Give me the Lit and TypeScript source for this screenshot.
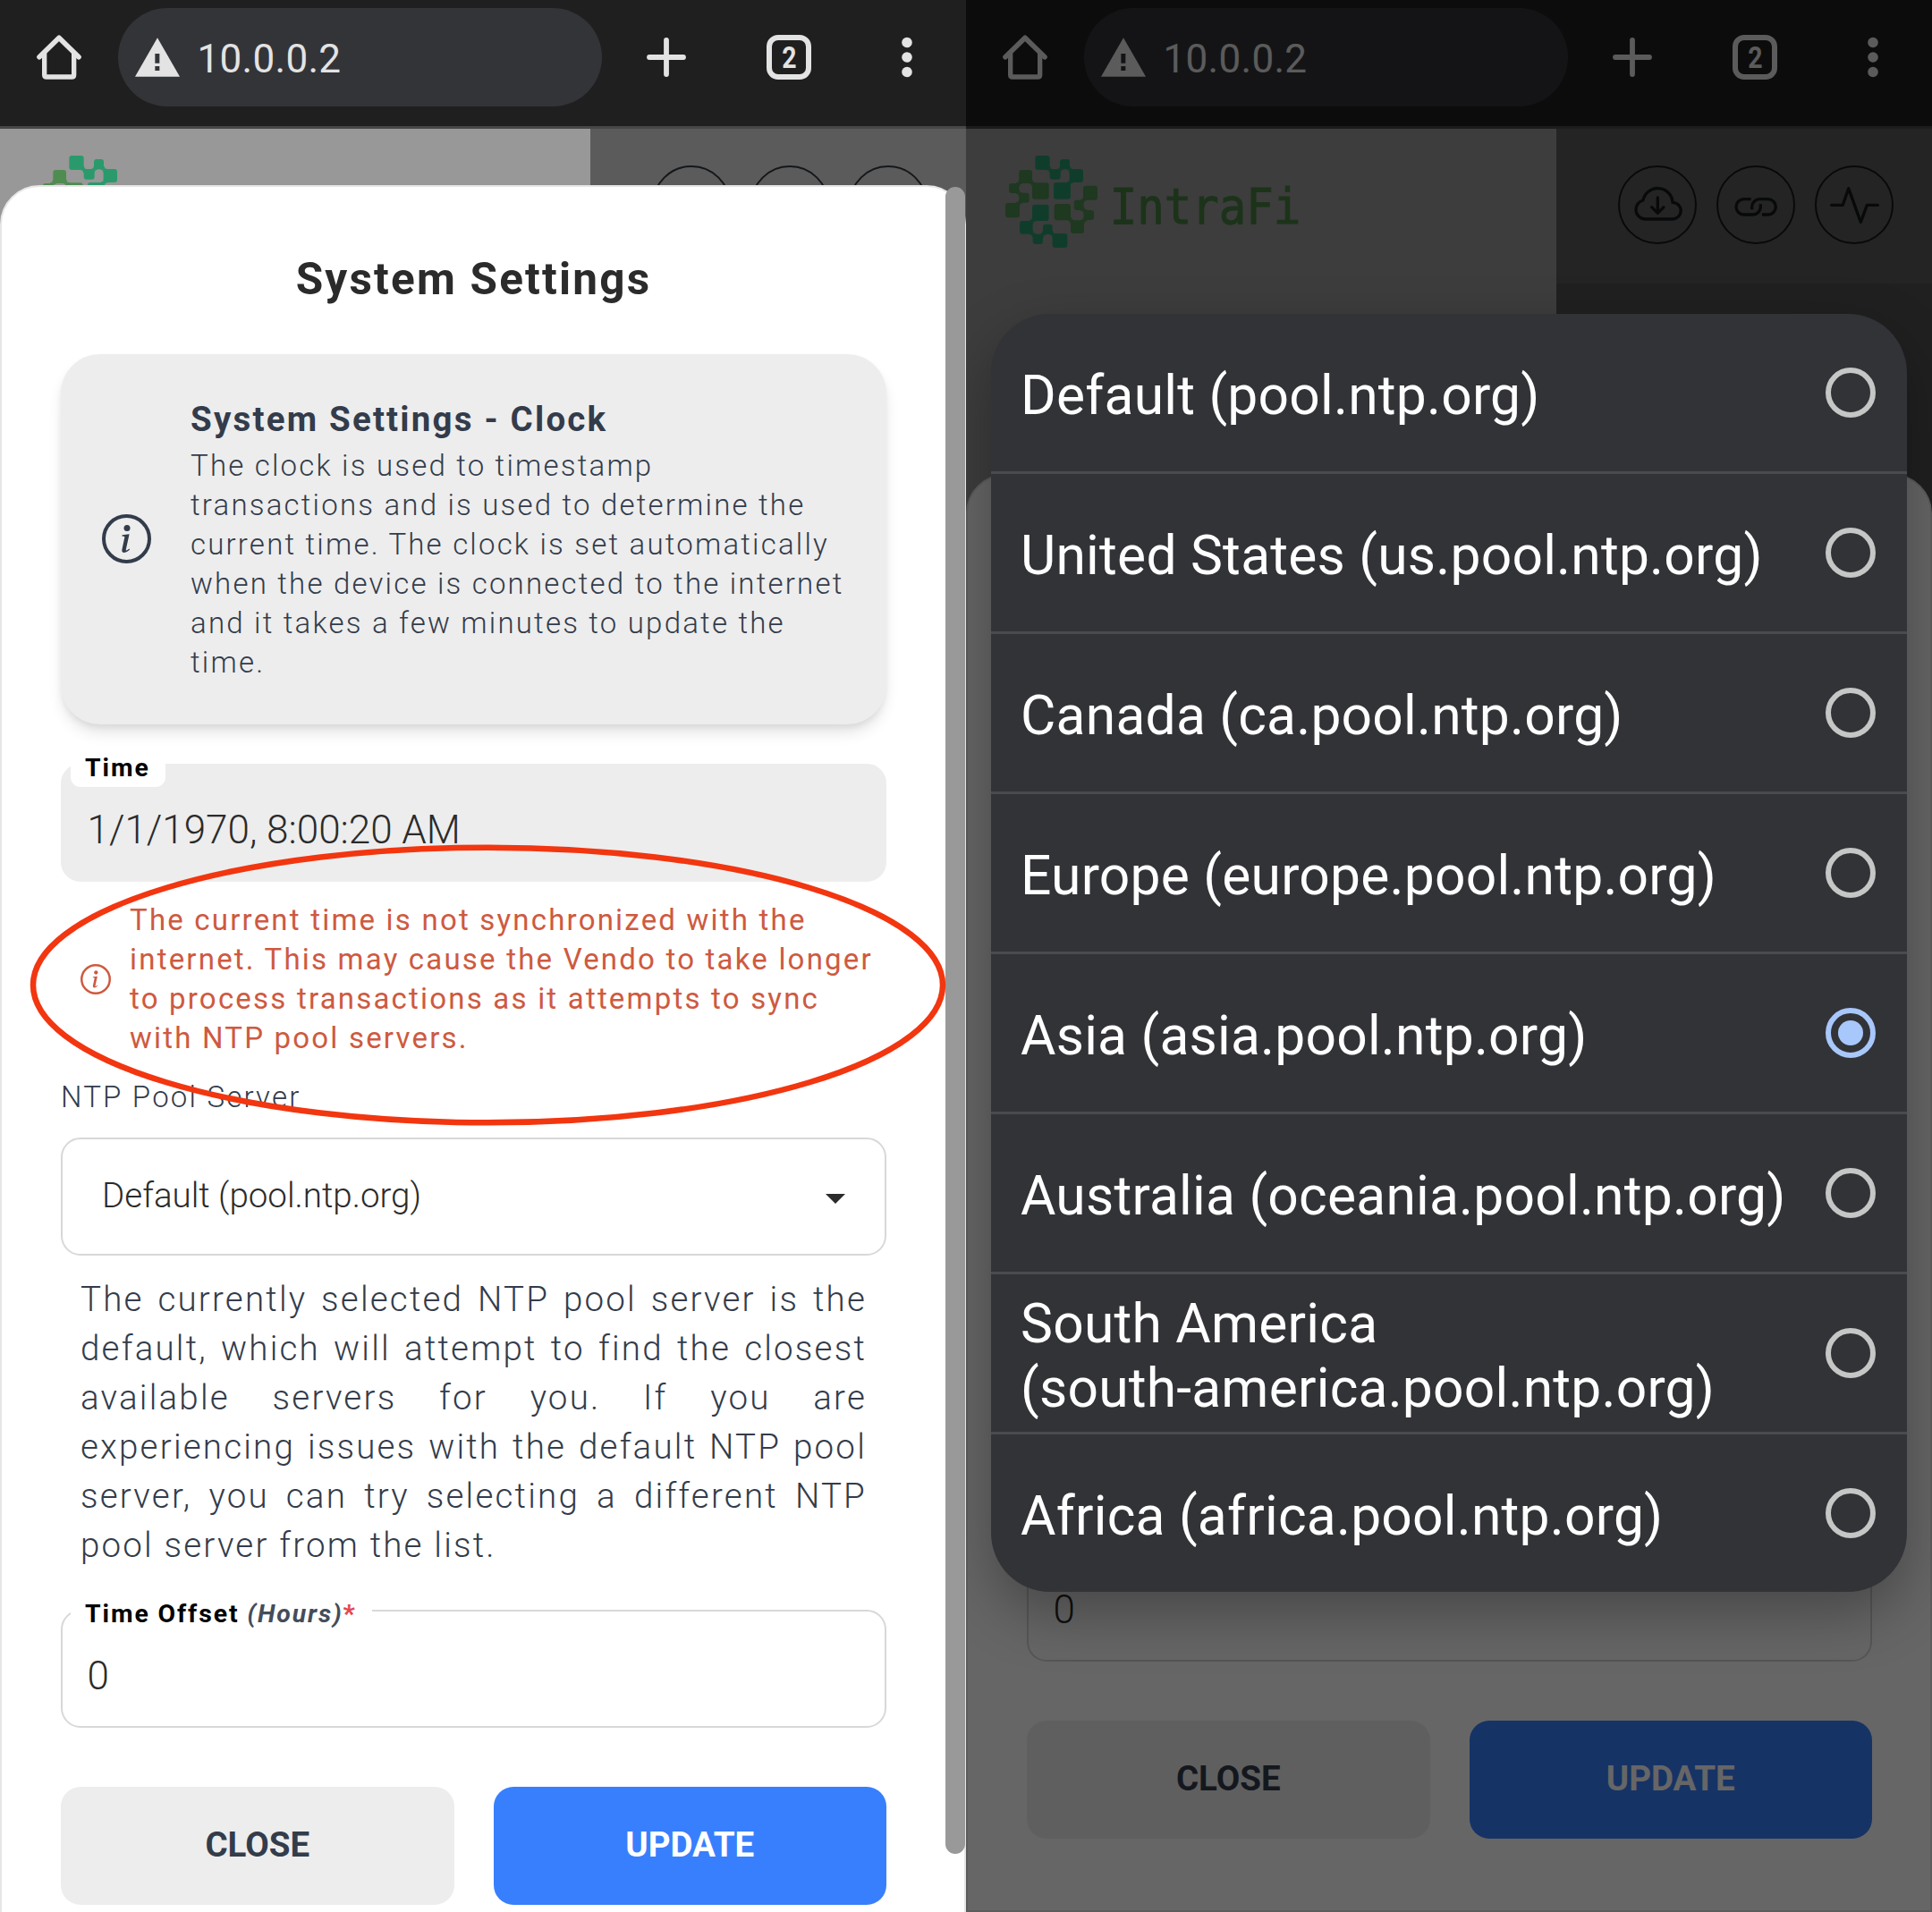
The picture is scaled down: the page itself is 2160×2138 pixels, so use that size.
import { LitElement, html, css, svg, nothing } from "lit";
import { customElement, property } from "lit/decorators.js";

const SERVERS = [
  ["Default (pool.ntp.org)"],
  ["United States (us.pool.ntp.org)"],
  ["Canada (ca.pool.ntp.org)"],
  ["Europe (europe.pool.ntp.org)"],
  ["Asia (asia.pool.ntp.org)"],
  ["Australia (oceania.pool.ntp.org)"],
  ["South America", "(south-america.pool.ntp.org)"],
  ["Africa (africa.pool.ntp.org)"],
];

@customElement("browser-bar")
class BrowserBar extends LitElement {
  static styles = css`
    :host {
      display: flex;
      align-items: center;
      box-sizing: border-box;
      height: 144px;
      padding: 0 60px 13px 41px;
      background: #1f1f1f;
      border-bottom: 3px solid #474747;
      color: #e3e3e3;
      font-family: Roboto, sans-serif;
    }
    svg { display: block; flex: none; }
    .pill {
      display: flex;
      align-items: center;
      box-sizing: border-box;
      width: 541px;
      height: 110px;
      margin-left: 41px;
      padding-left: 18.5px;
      border-radius: 55px;
      background: #333438;
      font-size: 44px;
      letter-spacing: 0.3px;
    }
    .address { margin: 4px 0 0 20px; }
    .plus { margin-left: 50px; }
    .tabs {
      display: flex;
      align-items: center;
      justify-content: center;
      box-sizing: border-box;
      width: 50px;
      height: 50px;
      margin-left: 90px;
      border: 6px solid currentColor;
      border-radius: 13px;
      font-size: 33px;
      font-weight: 700;
    }
    .count { transform: scaleX(0.86); }
    .dots { margin-left: 101px; }
  `;
  render() {
    return html`
      <svg width="50" height="50" viewBox="0 0 150 150" fill="none" stroke="currentColor" stroke-width="16" stroke-linecap="round" stroke-linejoin="round">
        <path d="M9 74L75 10L141 74" stroke-width="17" />
        <path d="M26 62V134Q26 141 33 141H118Q125 141 125 134V62" />
      </svg>
      <div class="pill">
        <svg width="50" height="44" viewBox="0 0 150 130">
          <path d="M75 0L150 130H0Z" fill="currentColor" />
          <path d="M67 53h15v32h-15zM67 95h15v15h-15z" fill="#333438" />
        </svg>
        <span class="address">10.0.0.2</span>
      </div>
      <svg class="plus" width="44" height="44" viewBox="0 0 44 44" stroke="currentColor" stroke-width="5.8" stroke-linecap="round"><path d="M22 3V41M3 22H41" /></svg>
      <div class="tabs"><span class="count">2</span></div>
      <svg class="dots" width="12" height="46" viewBox="0 0 12 46" fill="currentColor">
        <circle cx="6" cy="6.5" r="5.8" /><circle cx="6" cy="23" r="5.8" /><circle cx="6" cy="39.5" r="5.8" />
      </svg>
    `;
  }
}

@customElement("site-header")
class SiteHeader extends LitElement {
  @property({ type: Boolean }) wordmark = false;
  static styles = css`
    :host { display: flex; height: 560px; background: #989898; }
    .brand { width: 660px; box-sizing: border-box; padding: 16px 0 0 30px; }
    .brand svg { display: block; overflow: visible; }
    .side { flex: 1; background: #525252; }
    .actions {
      display: flex;
      align-items: center;
      justify-content: flex-end;
      gap: 22px;
      box-sizing: border-box;
      height: 173px;
      padding: 0 43px 3px 0;
      background: #5b5b5b;
    }
    .name {
      font-family: "DejaVu Sans Mono", monospace;
      font-size: 166px;
      fill: #467f43;
      stroke: #467f43;
      stroke-width: 3;
    }
  `;
  private group(color: string, rects: number[][], joints: number[][]) {
    return svg`<g fill=${color}>
      ${rects.map(([x1, y1, x2, y2]) => svg`<rect x=${x1} y=${y1} width=${x2 - x1} height=${y2 - y1} rx="9" />`)}
      ${joints.map(([x, y]) => svg`<path d="M${x - 10} ${y}Q${x} ${y} ${x} ${y - 10}Q${x} ${y} ${x + 10} ${y}Q${x} ${y} ${x} ${y + 10}Q${x} ${y} ${x - 10} ${y}Z" stroke=${color} stroke-width="3" />`)}
    </g>`;
  }
  private round(icon: unknown) {
    return html`<svg width="88" height="88" viewBox="0 0 264 264" fill="none" stroke="#14171b" stroke-width="10" stroke-linecap="round" stroke-linejoin="round">
      <circle cx="132" cy="132" r="129" stroke-width="6" />${icon}
    </svg>`;
  }
  render() {
    const teal = "#2a9a6c";
    const olive = "#4f8c50";
    return html`
      <div class="brand">
        <svg width="440" height="130" viewBox="0 0 1320 390">
          ${this.group(teal, [[142, 42, 191, 90], [191, 87, 227, 122], [225, 54, 258, 88], [257, 87, 303, 132], [204, 132, 261, 188]], [[191, 89], [226, 88], [258, 88], [259, 132]])}
          ${this.group(olive, [[88, 90, 132, 135], [54, 135, 88, 168], [132, 133, 188, 188], [88, 167, 122, 200], [42, 201, 90, 250]], [[88, 135], [132, 134], [88, 168], [89, 200]])}
          ${this.group(olive, [[303, 143, 351, 191], [272, 191, 305, 225], [305, 225, 339, 258], [206, 204, 261, 259], [261, 259, 306, 303]], [[304, 191], [305, 225], [261, 259], [306, 259]])}
          ${this.group(teal, [[132, 206, 188, 261], [90, 261, 134, 305], [134, 305, 168, 339], [168, 272, 200, 306], [200, 303, 250, 351]], [[133, 261], [134, 305], [168, 306], [200, 305]])}
          ${this.wordmark ? svg`<text class="name" x="392" y="270" textLength="641" lengthAdjust="spacingAndGlyphs">IntraFi</text>` : nothing}
        </svg>
      </div>
      <div class="side">
        <div class="actions">
          ${this.round(svg`<path d="M90 180A32 32 0 0 1 84 117A50 50 0 0 1 183 124A28 28 0 0 1 182 180Z" /><path d="M133 108V160M113 140L133 160L153 140" />`)}
          ${this.round(svg`<path stroke-linecap="butt" d="M116 113H92a26 26 0 0 0 0 52H122a26 26 0 0 0 26 -26V130M119 148V139a26 26 0 0 1 26 -26H173a26 26 0 0 1 0 52H153" />`)}
          ${this.round(svg`<path d="M56 133H94L113 77L154 190L175 133H211" />`)}
        </div>
      </div>
    `;
  }
}

const infoIcon = (size: number, ring: number) => html`<svg class="info" width=${size} height=${size} viewBox="0 0 55 55">
  <circle cx="27.5" cy="27.5" r=${27.5 - ring / 2} fill="none" stroke="currentColor" stroke-width=${ring} />
  <circle cx="28" cy="15.4" r="3.5" fill="currentColor" />
  <path d="M22.6 23.2L30.6 22.2L26.8 39.4Q26.7 40.8 28 40.2L30.6 38.6L31 39.8Q27.6 43 24.8 43Q21.8 42.8 22.4 39.4L25.4 25.4Q25.2 24.4 22.4 24.4Z" fill="currentColor" />
</svg>`;

@customElement("settings-dialog")
class SettingsDialog extends LitElement {
  @property({ type: Boolean, reflect: true }) compact = false;
  static styles = css`
    :host {
      display: flex;
      flex-direction: column;
      box-sizing: border-box;
      padding: 73px 87px 0 66px;
      background: #fff;
      border: 2px solid #e6e6e6;
      border-radius: 44px 44px 0 0;
      color: #333c4b;
      font-family: Roboto, sans-serif;
      font-weight: 300;
    }
    :host([compact]) { justify-content: flex-end; padding: 0 65px 80px 66px; }
    svg { display: block; flex: none; }
    .title {
      height: 60px;
      line-height: 60px;
      text-align: center;
      font-size: 49.5px;
      font-weight: 700;
      letter-spacing: 2.2px;
      color: #2b2b2b;
    }
    .card {
      display: flex;
      align-items: center;
      gap: 44px;
      box-sizing: border-box;
      height: 414px;
      margin-top: 54px;
      padding: 0 20px 2px 46px;
      border-radius: 44px;
      background: #ededed;
      box-shadow: 0 11px 17px -3px rgba(0, 0, 0, 0.12), 0 4px 6px rgba(0, 0, 0, 0.05);
    }
    .heading { line-height: 55px; margin-bottom: 3px; font-size: 38.5px; font-weight: 700; letter-spacing: 2.2px; }
    .copy { line-height: 44px; font-size: 33px; letter-spacing: 2.2px; }
    .field {
      position: relative;
      display: flex;
      align-items: center;
      box-sizing: border-box;
      height: 132px;
      padding: 15px 28px 0 27.5px;
      border: 2px solid #d8d8d9;
      border-radius: 22px;
      font-size: 44px;
      color: #2b2b2b;
    }
    .time { margin-top: 44px; border-color: #ededed; background: #ededed; }
    .offset { margin-top: 45px; }
    .label {
      position: absolute;
      left: 9px;
      top: -16px;
      height: 40px;
      line-height: 38px;
      padding: 0 17px 0 16px;
      border-radius: 11px;
      background: #fff;
      color: #000;
      font-size: 28.4px;
      font-weight: 700;
      letter-spacing: 1.9px;
    }
    .label i { color: #434d5b; }
    .label b { color: #e5484d; }
    .warning {
      display: flex;
      align-items: center;
      gap: 21px;
      margin-top: 21px;
      padding-left: 22px;
      line-height: 44px;
      font-size: 33px;
      font-weight: 400;
      letter-spacing: 2.2px;
      color: #ce5a40;
    }
    .caption { margin-top: 22px; line-height: 44px; font-size: 33px; letter-spacing: 2.2px; }
    .select { margin-top: 23px; padding: 0 44.5px 0 44px; justify-content: space-between; font-size: 38.5px; }
    .value { padding-bottom: 3px; }
    .arrow { margin-top: 4px; }
    .hint { margin: 21px 22px 0; line-height: 55px; text-align: justify; font-size: 38.5px; letter-spacing: 2.2px; }
    .buttons { display: grid; grid-template-columns: 1fr 1fr; gap: 44px; margin-top: 66px; }
    .button {
      display: flex;
      align-items: center;
      justify-content: center;
      box-sizing: border-box;
      height: 132px;
      padding-bottom: 3px;
      border-radius: 22px;
      background: #ededed;
      font-size: 38.5px;
      font-weight: 700;
    }
    .primary { background: #387ffd; color: #fff; }
  `;
  render() {
    return html`
      ${this.compact
        ? nothing
        : html`
            <div class="title">System Settings</div>
            <div class="card">
              ${infoIcon(55, 4)}
              <div>
                <div class="heading">System Settings - Clock</div>
                <div class="copy">The clock is used to timestamp<br />transactions and is used to determine the<br />current time. The clock is set automatically<br />when the device is connected to the internet<br />and it takes a few minutes to update the<br />time.</div>
              </div>
            </div>
            <div class="field time"><span class="label">Time</span>1/1/1970, 8:00:20 AM</div>
            <div class="warning">
              ${infoIcon(34, 4)}
              <div>The current time is not synchronized with the<br />internet. This may cause the Vendo to take longer<br />to process transactions as it attempts to sync<br />with NTP pool servers.</div>
            </div>
            <div class="caption">NTP Pool Server</div>
            <div class="field select">
              <span class="value">Default (pool.ntp.org)</span>
              <svg class="arrow" width="22" height="11" viewBox="0 0 22 11"><path d="M0 0H22L11 11Z" fill="#2b2b2b" /></svg>
            </div>
            <div class="hint">The currently selected NTP pool server is the default, which will attempt to find the closest available servers for you. If you are experiencing issues with the default NTP pool server, you can try selecting a different NTP pool server from the list.</div>
          `}
      <div class="field offset">
        ${this.compact ? nothing : html`<span class="label">Time Offset <i>(Hours)</i><b>*</b></span>`}0
      </div>
      <div class="buttons">
        <div class="button">CLOSE</div>
        <div class="button primary">UPDATE</div>
      </div>
    `;
  }
}

@customElement("option-picker")
class OptionPicker extends LitElement {
  static styles = css`
    :host {
      display: block;
      overflow: hidden;
      border-radius: 66px;
      background: #323337;
      box-shadow: 0 24px 64px rgba(0, 0, 0, 0.3);
      color: #fff;
      font-family: Roboto, sans-serif;
      font-size: 60.5px;
      line-height: 72px;
      letter-spacing: 0.23px;
    }
    .row {
      display: flex;
      align-items: center;
      justify-content: space-between;
      box-sizing: border-box;
      height: 179px;
      padding: 0 35px 0 33px;
      border-bottom: 3px solid #4a4b4d;
    }
    .row:last-child { height: 176px; border-bottom: 0; }
    .name { padding-top: 8px; white-space: nowrap; }
    .radio {
      display: flex;
      align-items: center;
      justify-content: center;
      box-sizing: border-box;
      flex: none;
      width: 56px;
      height: 56px;
      border: 6px solid #c4c7c5;
      border-radius: 50%;
    }
    .selected { border-color: #a8c7fa; }
    .dot { width: 28px; height: 28px; border-radius: 50%; background: #a8c7fa; }
  `;
  render() {
    return SERVERS.map(
      (lines, i) => html`<div class="row">
        <span class="name">${lines[0]}${lines[1] ? html`<br />${lines[1]}` : nothing}</span>
        <span class="radio ${i === 4 ? "selected" : ""}">${i === 4 ? html`<span class="dot"></span>` : nothing}</span>
      </div>`
    );
  }
}

@customElement("app-root")
class AppRoot extends LitElement {
  static styles = css`
    :host { display: grid; grid-template-columns: 1080px 1080px; height: 2138px; overflow: hidden; }
    .phone { position: relative; height: 2138px; overflow: hidden; background: #989898; }
    .dialog { position: absolute; left: 0; right: 0; top: 207px; bottom: -20px; }
    .lower { top: 530px; bottom: 0; }
    .scroll { position: absolute; right: 1px; top: 209px; width: 22px; height: 1864px; border-radius: 11px; background: #999; }
    .ring { position: absolute; left: 0; top: 930px; }
    .scrim { position: absolute; inset: 0; background: rgba(0, 0, 0, 0.6); }
    .picker { position: absolute; left: 28px; top: 351px; width: 1024px; }
  `;
  render() {
    return html`
      <div class="phone">
        <browser-bar></browser-bar>
        <site-header></site-header>
        <settings-dialog class="dialog"></settings-dialog>
        <div class="scroll"></div>
        <svg class="ring" width="1080" height="340" viewBox="0 0 1080 340">
          <ellipse cx="545.500" cy="171.500" rx="508.500" ry="153.800" fill="none" stroke="#f23610" stroke-width="6.500" />
        </svg>
      </div>
      <div class="phone">
        <browser-bar></browser-bar>
        <site-header wordmark></site-header>
        <settings-dialog class="dialog lower" compact></settings-dialog>
        <div class="scrim"></div>
        <option-picker class="picker"></option-picker>
      </div>
    `;
  }
}
